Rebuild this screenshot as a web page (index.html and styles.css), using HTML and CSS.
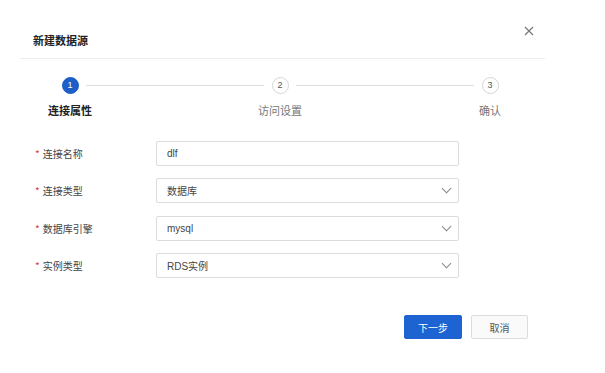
FILE: index.html
```html
<!DOCTYPE html>
<html lang="zh-CN">
<head>
    <meta charset="UTF-8">
    <meta name="viewport" content="width=device-width, initial-scale=1.0">
    <title>新建数据源</title>
    <link rel="stylesheet" href="styles.css">
</head>
<body>
    <div class="dialog">
        <div class="dialog-header">
            <h1 class="dialog-title">新建数据源</h1>
            <button class="close-btn" aria-label="关闭">
                <svg width="10" height="10" viewBox="0 0 10 10">
                    <path d="M1 1 L9 9 M9 1 L1 9" stroke="#777" stroke-width="1.2" fill="none"/>
                </svg>
            </button>
        </div>

        <div class="steps">
            <div class="step active">
                <span class="step-num">1</span>
                <span class="step-label">连接属性</span>
            </div>
            <div class="step-line"></div>
            <div class="step">
                <span class="step-num">2</span>
                <span class="step-label">访问设置</span>
            </div>
            <div class="step-line"></div>
            <div class="step">
                <span class="step-num">3</span>
                <span class="step-label">确认</span>
            </div>
        </div>

        <div class="form">
            <label class="form-label"><span class="req">*</span>连接名称</label>
            <div class="field">dlf</div>

            <label class="form-label"><span class="req">*</span>连接类型</label>
            <div class="field select">数据库<span class="chevron"></span></div>

            <label class="form-label"><span class="req">*</span>数据库引擎</label>
            <div class="field select">mysql<span class="chevron"></span></div>

            <label class="form-label"><span class="req">*</span>实例类型</label>
            <div class="field select">RDS实例<span class="chevron"></span></div>
        </div>

        <div class="dialog-footer">
            <button class="btn btn-primary">下一步</button>
            <button class="btn">取消</button>
        </div>
    </div>
</body>
</html>
```

FILE: styles.css
```css
body {
    margin: 0;
    background: #fff;
    font-family: "Noto Sans CJK SC", "Noto Sans", sans-serif;
    color: #333;
}
.dialog {
    width: 525px;
    margin-left: 20px;
}
.dialog-header {
    display: flex;
    justify-content: space-between;
    align-items: flex-start;
    height: 58px;
    border-bottom: 1px solid #ececec;
}
.dialog-title {
    margin: 32px 0 0 13px;
    font-size: 11px;
    line-height: 16px;
    font-weight: bold;
    color: #222;
}
.close-btn {
    margin: 26px 11px 0 0;
    padding: 0;
    border: none;
    background: none;
    width: 10px;
    height: 10px;
    display: flex;
}
.steps {
    display: flex;
    align-items: flex-start;
    margin: 18px 47px 0 42px;
}
.step {
    width: 16px;
    display: flex;
    flex-direction: column;
    align-items: center;
}
.step-num {
    width: 15px;
    height: 15px;
    border: 1px solid #d6d6d6;
    border-radius: 50%;
    font-size: 9px;
    line-height: 15px;
    text-align: center;
    color: #555;
    font-family: "Liberation Sans", sans-serif;
}
.step.active .step-num {
    background: #1d5fc7;
    border-color: #1d5fc7;
    color: #fff;
}
.step-label {
    margin-top: 8px;
    white-space: nowrap;
    font-size: 11px;
    line-height: 16px;
    color: #777;
}
.step.active .step-label {
    color: #222;
    font-weight: bold;
}
.step-line {
    flex: 1;
    height: 1px;
    background: #dedede;
    margin: 8px 8px 0;
}
.form {
    display: grid;
    grid-template-columns: 121px 303px;
    grid-auto-rows: 25px;
    row-gap: 12.4px;
    margin: 23px 0 0 15px;
}
.form-label {
    display: flex;
    align-items: center;
    font-size: 10px;
    color: #444;
}
.req {
    color: #d9363e;
    margin-right: 3px;
    font-size: 10px;
}
.field {
    display: flex;
    align-items: center;
    justify-content: space-between;
    border: 1px solid #dcdcdc;
    border-radius: 2px;
    padding: 0 10px;
    font-size: 10px;
    color: #444;
    font-family: "Liberation Sans", "Noto Sans CJK SC", sans-serif;
}
.chevron {
    width: 6px;
    height: 6px;
    border-right: 1px solid #888;
    border-bottom: 1px solid #888;
    transform: rotate(45deg);
    margin: -4px -2px 0 0;
}
.dialog-footer {
    display: flex;
    justify-content: flex-end;
    gap: 9px;
    margin: 37px 17px 0 0;
}
.btn {
    width: 57px;
    height: 24px;
    padding: 0;
    border: 1px solid #dcdcdc;
    border-radius: 2px;
    background: #fafafa;
    font-family: "Noto Sans CJK SC", sans-serif;
    font-size: 10px;
    color: #555;
}
.btn-primary {
    width: 58px;
    background: #1d63d2;
    border-color: #1d63d2;
    color: #fff;
}
```
